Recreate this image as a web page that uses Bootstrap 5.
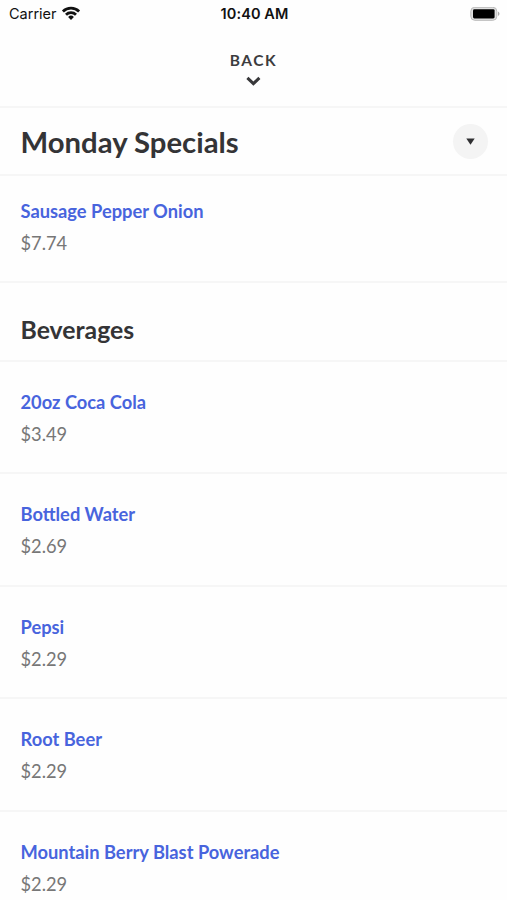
<!DOCTYPE html>
<html lang="en">
<head>
<meta charset="utf-8">
<meta name="viewport" content="width=device-width, initial-scale=1">
<title>Monday Specials</title>
<link href="https://cdn.jsdelivr.net/npm/bootstrap@5.3.0/dist/css/bootstrap.min.css" rel="stylesheet">
<style>
  body { font-family: Lato, sans-serif; color: #343436; background: #fefefe; }
  .screen { height: 900px; }
  .status { height: 28px; padding: 0 7px 0 9px; font: 500 14.5px/28px Inter, sans-serif; color: #111; }
  .status .side { flex: 1 1 0; }
  .carrier { font-weight: 400; letter-spacing: 0; }
  .clock { font-weight: 600; letter-spacing: .1px; }
  .back-bar { height: 80px; padding-top: 21px; border-bottom: 2px solid #f6f6f6; color: #3c3c3e; }
  .back-label { font-size: 15.5px; line-height: 22px; letter-spacing: 1.5px; font-weight: 700; }
  .chevron { margin-top: 3px; }
  .title-bar { height: 68px; padding: 2px 19px 0 20.5px; border-bottom: 2px solid #f6f6f6; }
  .title-bar h1 { font-size: 29.3px; line-height: 36px; font-weight: 700; }
  .toggle { width: 35px; height: 35px; background: #f4f4f4; margin-top: -2px; }
  .group-title { height: 78.8px; padding: 30px 20.5px 0; border-bottom: 2px solid #f6f6f6; }
  .group-title h2 { font-size: 24.8px; line-height: 34px; font-weight: 700; }
  .dish { height: 112.45px; padding: 24.2px 20.5px 0; border-bottom: 2px solid #f6f6f6; font-size: 18.3px; line-height: 32px; }
  .dish.compact { height: 107px; padding-top: 19px; }
  .dish a { color: #4864dd; font-weight: 700; }
  .price { color: #777; }
</style>
</head>
<body>
<div class="screen overflow-hidden">
  <header>
    <div class="status d-flex align-items-center">
      <div class="side d-flex align-items-center">
        <span class="carrier">Carrier</span>
        <svg class="ms-1" width="20" height="16" viewBox="0 0 20 16" fill="none" stroke="#111" stroke-width="2.8">
          <path d="M1.9 5.4a11.5 11.5 0 0 1 16.2 0M5 8.7a7.1 7.1 0 0 1 10 0"/>
          <path d="M7.1 11a4.1 4.1 0 0 1 5.8 0L10 14z" fill="#111" stroke="none"/>
        </svg>
      </div>
      <span class="clock">10:40 AM</span>
      <div class="side d-flex justify-content-end">
        <svg width="30" height="15" viewBox="0 0 30 15">
          <rect x=".8" y=".3" width="26" height="13" rx="4" fill="#e0e0e0" stroke="#b9b9b9" stroke-width="1"/>
          <rect x="3" y="2.2" width="21.6" height="9.2" rx="1.4" fill="#000"/>
          <path d="M28 4.6q1.5.7 1.5 2.2T28 9z" fill="#aaa"/>
        </svg>
      </div>
    </div>
    <div class="back-bar d-flex flex-column align-items-center">
      <span class="back-label">BACK</span>
      <svg class="chevron" width="16" height="13" viewBox="0 0 16 13" fill="none" stroke="#38383a" stroke-width="3"><path d="M1.4 3.9l6 5.8 6-5.8"/></svg>
    </div>
  </header>
  <main>
    <div class="title-bar d-flex align-items-center justify-content-between">
      <h1 class="m-0">Monday Specials</h1>
      <button class="toggle btn border-0 rounded-circle p-0 d-flex align-items-center justify-content-center" type="button" aria-label="Choose menu">
        <svg width="9" height="7" viewBox="0 0 9 7"><path d="M.3.4h8.4L4.5 6.8z" fill="#303032"/></svg>
      </button>
    </div>
    <div class="dish compact"><a class="d-block text-decoration-none" href="#">Sausage Pepper Onion</a><div class="price">$7.74</div></div>
    <div class="group-title"><h2 class="m-0">Beverages</h2></div>
    <div class="dish"><a class="d-block text-decoration-none" href="#">20oz Coca Cola</a><div class="price">$3.49</div></div>
    <div class="dish"><a class="d-block text-decoration-none" href="#">Bottled Water</a><div class="price">$2.69</div></div>
    <div class="dish"><a class="d-block text-decoration-none" href="#">Pepsi</a><div class="price">$2.29</div></div>
    <div class="dish"><a class="d-block text-decoration-none" href="#">Root Beer</a><div class="price">$2.29</div></div>
    <div class="dish"><a class="d-block text-decoration-none" href="#">Mountain Berry Blast Powerade</a><div class="price">$2.29</div></div>
  </main>
</div>
<script src="https://cdn.jsdelivr.net/npm/bootstrap@5.3.0/dist/js/bootstrap.bundle.min.js"></script>
</body>
</html>
